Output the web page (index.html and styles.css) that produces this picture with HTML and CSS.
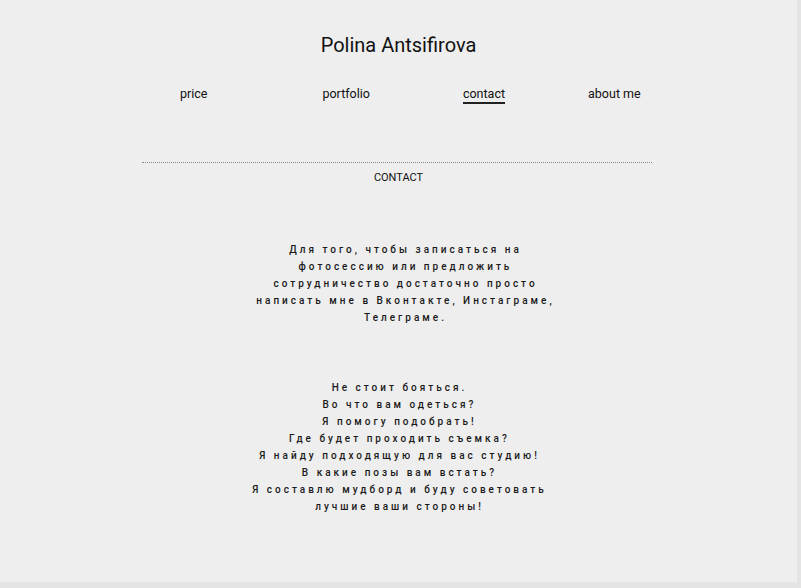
FILE: index.html
```html
<!DOCTYPE html>
<html lang="ru">
<head>
<meta charset="utf-8">
<title>Polina Antsifirova</title>
<link rel="stylesheet" href="styles.css">
</head>
<body>
<div class="page">
  <header class="header">
    <h1 class="title">Polina Antsifirova</h1>
    <nav class="nav">
      <a class="nav-item nav-price" href="#">price</a>
      <a class="nav-item nav-portfolio" href="#">portfolio</a>
      <a class="nav-item nav-contact active" href="#">contact</a>
      <a class="nav-item nav-about" href="#">about me</a>
    </nav>
  </header>
  <main class="content">
    <hr class="divider">
    <h2 class="section-title">CONTACT</h2>
    <p class="text text-first">Для того, чтобы записаться на<br>фотосессию или предложить<br>сотрудничество достаточно просто<br>написать мне в Вконтакте, Инстаграме,<br>Телеграме.</p>
    <p class="text text-second">Не стоит бояться.<br>Во что вам одеться?<br>Я помогу подобрать!<br>Где будет проходить съемка?<br>Я найду подходящую для вас студию!<br>В какие позы вам встать?<br>Я составлю мудборд и буду советовать<br>лучшие ваши стороны!</p>
  </main>
</div>
</body>
</html>
```
FILE: styles.css
```css
html {
  background: #e4e4e4;
}
body {
  margin: 0;
  font-family: Roboto, "Noto Sans", sans-serif;
  color: #111;
}
.page {
  width: 797px;
  height: 582px;
  background: #eeeeee;
  box-sizing: border-box;
  padding-top: 33px;
}
.header {
  display: flex;
  flex-direction: column;
  align-items: center;
}
.title {
  margin: 0;
  font-size: 20px;
  line-height: 24px;
  font-weight: 400;
  color: #111;
}
.nav {
  align-self: stretch;
  display: flex;
  margin-top: 29px;
  padding-left: 180px;
}
.nav-item {
  font-size: 12.5px;
  line-height: 16px;
  color: #111;
  text-decoration: none;
}
.nav-portfolio { margin-left: 115px; }
.nav-contact { margin-left: 93px; }
.nav-about { margin-left: 83px; }
.nav-item.active {
  border-bottom: 2px solid #222;
}
.content {
  display: flex;
  flex-direction: column;
  align-items: center;
  margin-top: 58px;
}
.divider {
  margin: 0 0 0 -3px;
  width: 510px;
  border: 0;
  border-top: 1px dotted #8a8a8a;
  height: 0;
}
.section-title {
  margin: 8px 0 0;
  font-size: 11px;
  line-height: 14px;
  font-weight: 400;
  color: #111;
}
.text {
  margin: 0;
  font-size: 10px;
  font-weight: 500;
  line-height: 17px;
  letter-spacing: 3px;
  text-align: center;
  color: #1a1a1a;
}
.text-first {
  margin-top: 56px;
  margin-left: 14px;
}
.text-second {
  margin-top: 53px;
  margin-left: 2px;
}
```
